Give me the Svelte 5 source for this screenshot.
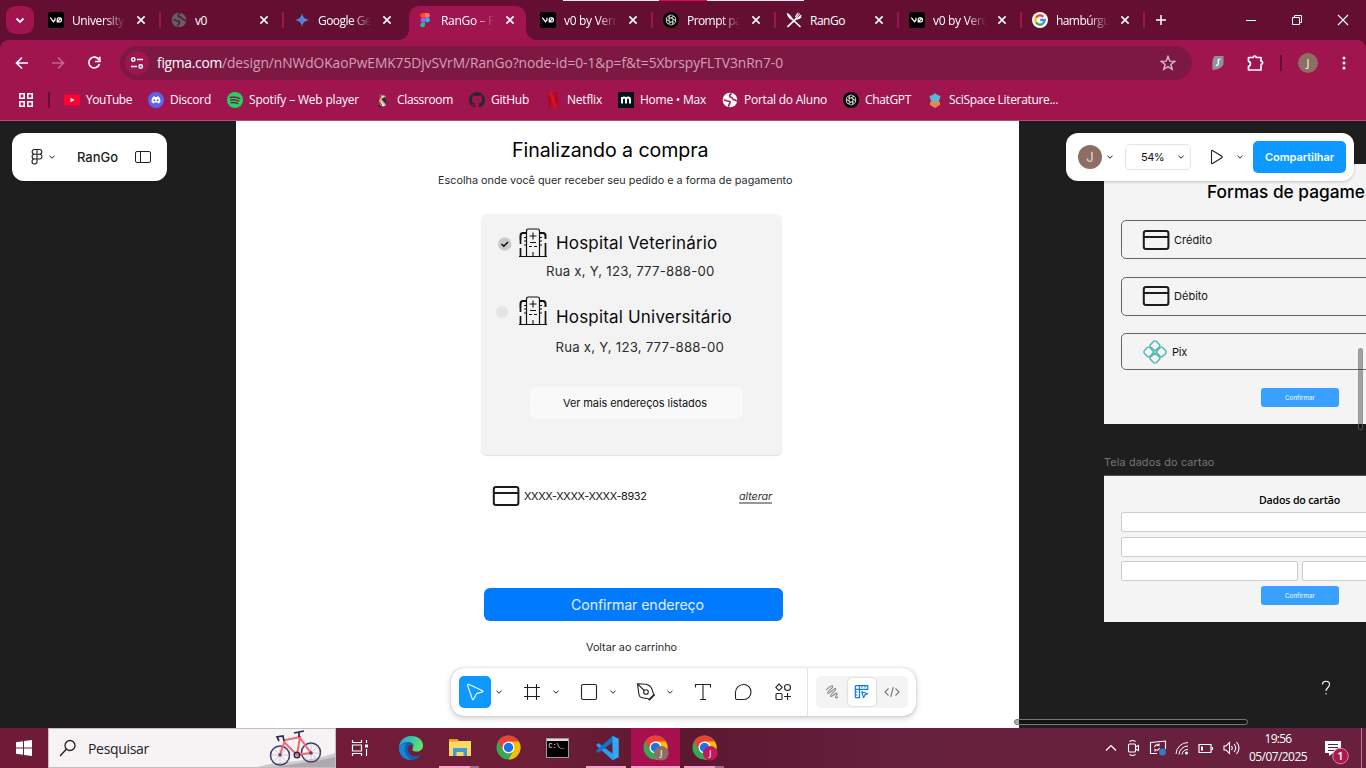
<script>
  const tabs = [
    { icon: 'v0', title: 'University', w: 52, fade: true, sep: true },
    { icon: 'globe', title: 'v0', w: 12, sep: true },
    { icon: 'gemini', title: 'Google Ge', w: 53, fade: true },
    { icon: 'figma', title: 'RanGo – F', w: 53, fade: true, active: true },
    { icon: 'v0', title: 'v0 by Verc', w: 54, fade: true, sep: true },
    { icon: 'gpt', title: 'Prompt pa', w: 54, fade: true, sep: true },
    { icon: 'cutlery', title: 'RanGo', w: 35, sep: true },
    { icon: 'v0', title: 'v0 by Verc', w: 54, fade: true, sep: true },
    { icon: 'google', title: 'hambúrgu', w: 54, fade: true, sep: true }
  ];
  const bookmarks = [
    { icon: 'youtube', name: 'YouTube', w: 46 },
    { icon: 'discord', name: 'Discord', w: 41 },
    { icon: 'spotify', name: 'Spotify – Web player', w: 110 },
    { icon: 'owl', name: 'Classroom', w: 56 },
    { icon: 'github', name: 'GitHub', w: 38 },
    { icon: 'netflix', name: 'Netflix', w: 35 },
    { icon: 'max', name: 'Home • Max', w: 66 },
    { icon: 'portal', name: 'Portal do Aluno', w: 83 },
    { icon: 'gpt', name: 'ChatGPT', w: 46 },
    { icon: 'scispace', name: 'SciSpace Literature...', w: 109 }
  ];
  // Canvas labels: left edge, vertical centre, width and font size.
  const labels = [
    { t: 'Finalizando a compra', x: 512, y: 151, w: 196.5, s: 19.6, c: '#000' },
    { t: 'Escolha onde você quer receber seu pedido e a forma de pagamento', x: 438, y: 180.5, w: 354.5, s: 10.8, c: '#2a2a2a' },
    { t: 'Hospital Veterinário', x: 556, y: 243, w: 161.5, s: 17, c: '#0a0a0a' },
    { t: 'Rua x, Y, 123, 777-888-00', x: 546, y: 272, w: 168.5, s: 13.2, c: '#2a2a2a' },
    { t: 'Hospital Universitário', x: 556, y: 316.5, w: 176, s: 17, c: '#0a0a0a' },
    { t: 'Rua x, Y, 123, 777-888-00', x: 555.5, y: 347.5, w: 168.5, s: 13.2, c: '#2a2a2a' },
    { t: 'XXXX-XXXX-XXXX-8932', x: 524, y: 497, w: 122.5, s: 10.9, c: '#161616' },
    { t: 'Voltar ao carrinho', x: 586, y: 647.5, w: 91, s: 10.8, c: '#2a2a2a' },
    { t: 'Tela dados do cartao', x: 1104, y: 463, w: 110.5, s: 10.8, c: '#777' }
  ];
  // Spreads a label's letters so that it spans the given width.
  function fit(node, w) {
    const apply = () => {
      node.style.letterSpacing = '0px';
      const n = [...node.textContent].length;
      const r = document.createRange();
      r.selectNodeContents(node);
      node.style.letterSpacing = (w - r.getBoundingClientRect().width) / n + 'px';
    };
    apply();
    document.fonts?.ready.then(apply);
  }
</script>

{#snippet knot(c)}
  <g fill="none" stroke={c} stroke-width="1.100">
    {#each [0, 60, 120, 180, 240, 300] as a}
      <path transform="rotate({a} 8 8)" d="M5.600 9.400V4.400a2.600 2.600 0 0 1 4-2.200L12.600 4M8 5.400l2.400-1.300" />
    {/each}
  </g>
{/snippet}

{#snippet chrome(badge)}
  <svg width="26" height="26" viewBox="0 0 26 26">
    <circle cx="12.5" cy="12.5" r="12" fill="#34a853" />
    <path d="M12.5 12.5 2.1 6.5A12 12 0 0 1 22.9 6.5Z" fill="#ea4335" />
    <path d="M12.5 6.5h10.4A12 12 0 0 1 12.5 24.5L17.7 15.5Z" fill="#fbbc04" />
    <path d="M2.1 6.5 7.3 15.5 12.5 12.5V6.5Z" fill="#ea4335" />
    <circle cx="12.5" cy="12.5" r="6" fill="#fff" /><circle cx="12.5" cy="12.5" r="4.7" fill="#1a73e8" />
    {#if badge}<circle cx="18.3" cy="18.3" r="7.3" fill={badge} /><text x="18.3" y="21.6" text-anchor="middle" font-size="9.5" font-family="Open Sans, sans-serif" fill="#fff">J</text>{/if}
  </svg>
{/snippet}

{#snippet fav(k)}
  <svg class="fav" width="16" height="16" viewBox="0 0 16 16">
    {#if k === 'v0'}
      <rect width="16" height="16" rx="2.5" fill="#000" />
      <path d="M2.300 5.700 5.500 9.700 7 8V5.700M9.200 9.900h2.700a1.500 1.500 0 0 0 1.500-1.500V7.300a1.500 1.500 0 0 0-1.500-1.500h-1.200a1.500 1.500 0 0 0-1.500 1.500ZM9.500 9.500l3.600-3.400" fill="none" stroke="#fff" stroke-width="1.200" />
    {:else if k === 'globe'}
      <circle cx="8" cy="8" r="7.3" fill="#5f6368" /><path d="M2.500 7.500c1.500 0 2 1.500 4 1.500s2.500 1 1.500 2.500-1.500 1.500-1 3M9 1.500C6.500 3 6.500 5 9 5s1 2.500 3 2.500 1.500 1.500 3 1.500" fill="none" stroke="#640f32" stroke-width="1.500" />
    {:else if k === 'gemini'}
      <defs><linearGradient id="gm" x1="0" y1="1" x2="1" y2="0"><stop stop-color="#9a78c8" /><stop offset=".45" stop-color="#4285d8" /><stop offset="1" stop-color="#60a8e8" /></linearGradient></defs>
      <path d="M8 1.300C9 5.500 10.500 7 14.700 8 10.500 9 9 10.500 8 14.700 7 10.500 5.500 9 1.300 8 5.500 7 7 5.500 8 1.300Z" fill="url(#gm)" />
    {:else if k === 'figma'}
      <path d="M8 1H5.500a2.400 2.400 0 0 0 0 4.800H8Z" fill="#f24e1e" /><path d="M8 1h2.500a2.400 2.400 0 0 1 0 4.800H8Z" fill="#ff7262" /><path d="M8 5.800H5.500a2.400 2.400 0 0 0 0 4.700H8Z" fill="#a259ff" /><circle cx="10.500" cy="8.100" r="2.400" fill="#1abcfe" /><path d="M8 10.500H5.500A2.400 2.400 0 1 0 8 13Z" fill="#0acf83" />
    {:else if k === 'gpt'}
      <circle cx="8" cy="8" r="8" fill="#000" /><g transform="translate(1.6 1.600) scale(.8)">{@render knot('#ddd')}</g>
    {:else if k === 'cutlery'}
      <g fill="none" stroke="#fff" stroke-linecap="round"><path d="m2 14.300 8.500-8M6 7l8 7.500" stroke-width="1.700" /><path d="m10.500 5.500 3-3.500M11.500 6.500 15 3.300M9.600 4.600 12 1M10 6.500c1.200 1 3 .3 5-1.500" stroke-width="1.100" /></g><path d="M.8 1C3 1.500 6.500 4.500 6.800 8 4 8 1 4.500.8 1Z" fill="#fff" />
    {:else if k === 'google'}
      <circle cx="8" cy="8" r="8" fill="#fff" /><g fill="none" stroke-width="2.300"><path d="M4 5.600A4.700 4.700 0 0 1 11.400 4.700" stroke="#ea4335" /><path d="M4 5.600a4.700 4.700 0 0 0 0 4.800" stroke="#fbbc04" /><path d="M4 10.400a4.700 4.700 0 0 0 7 1.200" stroke="#34a853" /><path d="M11 11.600A4.700 4.700 0 0 0 12.700 8H8.200" stroke="#4285f4" /></g>
    {:else if k === 'youtube'}
      <rect y="2.500" width="16" height="11" rx="2.700" fill="#f03" /><path d="m6.500 5.700 4 2.300-4 2.300Z" fill="#fff" />
    {:else if k === 'discord'}
      <circle cx="8" cy="8" r="8" fill="#5865f2" /><path d="M5 4.700 6.700 4.300l.4.600h1.800l.4-.6 1.700.4c1.200 1.900 1.600 3.500 1.400 5.500-.8.700-1.600 1-2.300 1.200l-.7-1H6.600l-.7 1c-.7-.2-1.500-.5-2.300-1.200-.2-2 .2-3.600 1.400-5.500Z" fill="#fff" /><circle cx="6.300" cy="8.200" r="1" fill="#5865f2" /><circle cx="9.700" cy="8.200" r="1" fill="#5865f2" />
    {:else if k === 'spotify'}
      <circle cx="8" cy="8" r="8" fill="#1ed760" /><path d="M3.300 5.500c3.300-.9 6.700-.5 9.600 1.100M3.700 8.200c2.900-.8 5.700-.4 8.100 1M4.200 10.800c2.400-.6 4.600-.3 6.500.8" fill="none" stroke="#851747" stroke-width="1.400" stroke-linecap="round" />
    {:else if k === 'owl'}
      <path d="M4 1.500 6 3l4 .500 1.500 5-1 5.500H5L4 9l1-3Z" fill="#e0a878" /><path d="m4 1.500 2 2-.5 3ZM6.500 7l5 6V7l-2-2ZM3.500 12l3 2-1 1.500h-2Z" fill="#222b55" /><path d="m7 4 2 .500L8 6ZM6 9l4 5-2.500.500Z" fill="#fff0d4" /><path d="M4 10.500 7 13M9 14.500h4" stroke="#762f38" />
    {:else if k === 'github'}
      <path d="M8 0a8 8 0 0 0-2.500 15.600c.4.100.5-.2.500-.4v-1.500c-2.200.5-2.700-.9-2.700-.9-.4-.9-.9-1.200-.9-1.200-.7-.5.1-.5.1-.5.800.1 1.200.8 1.200.8.700 1.300 1.900.9 2.400.7.100-.5.300-.9.500-1.100-1.800-.2-3.700-.9-3.700-4 0-.9.300-1.600.8-2.100-.1-.2-.4-1 .1-2.100 0 0 .7-.2 2.200.8a7.600 7.600 0 0 1 4 0c1.500-1 2.200-.8 2.200-.8.500 1.100.2 1.900.1 2.100.5.500.8 1.200.8 2.100 0 3.100-1.900 3.800-3.700 4 .3.300.6.800.6 1.500v2.200c0 .2.100.5.500.4A8 8 0 0 0 8 0Z" fill="#24292f" />
    {:else if k === 'netflix'}
      <path d="M3.500 0H6v15.500l-2.500.5ZM10 0h2.500v16l-2.500-.5Z" fill="#b20710" /><path d="M3.500 0H6.300l6.200 16-2.800-.4Z" fill="#f00a18" />
    {:else if k === 'max'}
      <rect width="16" height="16" fill="#07131d" /><path d="M4 11.500V5M4 7.500C4.500 4.800 8 4.800 8 7.500v4M8 7.500c.5-2.700 4-2.700 4 0v4" fill="none" stroke="#fff" stroke-width="2" />
    {:else if k === 'portal'}
      <circle cx="8" cy="8" r="7.300" fill="#fff" /><path d="M2 8c2 0 2.500 1.200 4.500 1.200s2 1.300 1 2.500-1 1.500-.8 3M9.500 1.500C7 3 7 5 9 5.200s1 2.300 3 2.500 1.500 1 3 1" stroke="#a0154e" stroke-width="1.600" fill="none" />
    {:else if k === 'scispace'}
      <path d="m3 10 5-3 5 3v3l-5 3-5-3Z" fill="#e98645" /><path d="m2.500 4 3-1L8 1l2.500 2 3 1-1 4L8 11 3.500 8Z" fill="#59b7dc" /><path d="m4 8.500 4 2.500 4-2.500" stroke="#caa078" fill="none" />
    {/if}
  </svg>
{/snippet}

{#snippet chev()}
  <svg width="8" height="8" viewBox="0 0 8 8"><path d="M1.500 2.800 4 5.200l2.500-2.400" fill="none" stroke="#222" /></svg>
{/snippet}

{#snippet card()}
  <svg width="28" height="22" viewBox="0 0 28 22"><rect x="1.800" y="2" width="24.600" height="18" rx="2.200" fill="none" stroke="#1c1c1e" stroke-width="2" /><path d="M1.800 8h24.600" stroke="#1c1c1e" stroke-width="2" /></svg>
{/snippet}

{#snippet hospital()}
  <svg width="28" height="30" viewBox="0 0 28 30">
    <g fill="none" stroke="#111">
      <path d="M0 28.500h28" stroke-width="1" /><path d="M7.500 28V3Q7.500 1 9.500 1h9q2 0 2 2v25" stroke-width="1.200" />
      <path d="M14 4.500v7M10.500 8h7M11 14.500h6M10 18.500h3M15 18.500h3M14 24v4M5 9.500h2.500M5 13h2.500M5 17h2.500M20.500 9.500H23M20.500 13H23M20.500 17H23" stroke-width="1.100" />
      <path d="M1.500 12V8Q1.500 5 4 5h3M21 5h3q2.500 0 2.500 3v3" stroke-width="2" /><path d="M1.500 12v4M26.500 15v13M1.500 20v8" stroke-width="1.700" />
    </g>
  </svg>
{/snippet}

<div class="screen">
  <header class="strip">
    <div class="peek"></div>
    <div class="search-tabs"><svg width="28" height="28" viewBox="0 0 28 28"><path d="m10.500 12.500 3.500 3.500 3.500-3.500" fill="none" stroke="#fff" stroke-width="1.800" /></svg></div>
    {#each tabs as t}
      <div class="tab" class:active={t.active}>
        {@render fav(t.icon)}
        <div class="title" class:fade={t.fade}><span use:fit={t.w}>{t.title}</span></div>
        <svg width="10" height="10" viewBox="0 0 10 10"><path d="m1.400 1.400 7.200 7.200m0-7.200L1.400 8.600" stroke="#fff" stroke-width="1.600" /></svg>
        <i class:on={t.sep}></i>
      </div>
    {/each}
    <svg class="plus" width="12" height="12" viewBox="0 0 12 12"><path d="M6 1v10M1 6h10" stroke="#fff" stroke-width="1.500" /></svg>
    <div class="winctl">
      <svg width="12" height="12"><path d="M1 6.500h10" stroke="#fff" /></svg>
      <svg width="12" height="12"><path d="M1.500 3.500h7v7h-7ZM3.500 3V1.500h7v7H9" stroke="#fff" fill="none" /></svg>
      <svg width="12" height="12"><path d="m1 1 10 10M11 1 1 11" stroke="#fff" stroke-width="1.100" /></svg>
    </div>
  </header>

  <div class="nav">
    <svg width="16" height="16" viewBox="0 0 16 16"><path d="M14 8H3M8 2.500 2.500 8 8 13.500" fill="none" stroke="#fff" stroke-width="1.700" /></svg>
    <svg width="16" height="16" viewBox="0 0 16 16"><path d="M2 8h11M8 2.500 13.500 8 8 13.500" fill="none" stroke="#c1668c" stroke-width="1.700" /></svg>
    <svg width="16" height="16" viewBox="0 0 16 16"><path d="M13 5A5.400 5.400 0 1 0 13.400 9" fill="none" stroke="#fff" stroke-width="1.700" /><path d="M13.800 1.800v4.700H9.100" fill="none" stroke="#fff" stroke-width="1.700" /></svg>
    <div class="omni">
      <span class="site"><svg width="14" height="14" viewBox="0 0 14 14"><g fill="none" stroke="#fff" stroke-width="1.500"><circle cx="3.300" cy="3.500" r="1.700" /><path d="M7 3.500h6M1 10.500h6" /><circle cx="10.700" cy="10.500" r="1.700" /></g></svg></span>
      <span class="url"><b use:fit={65}>figma.com</b><span use:fit={561}>/design/nNWdOKaoPwEMK75DjvSVrM/RanGo?node-id=0-1&p=f&t=5XbrspyFLTV3nRn7-0</span></span>
      <svg width="16" height="16" viewBox="0 0 16 16"><path d="m8 1.500 1.800 4.600 4.900.3-3.800 3.100 1.300 4.800L8 11.600l-4.200 2.700 1.300-4.800L1.300 6.400l4.900-.3Z" fill="none" stroke="#d8bac8" stroke-width="1.400" /></svg>
    </div>
    <div class="ext">
      <svg width="14" height="16" viewBox="0 0 14 16"><path d="M4 1h8.500v7c0 4-4 6.500-11 7C1.500 10 .5 3 4 1Z" fill="#8f9396" /><path d="M9.300 4.500C6 3.800 7.800 7 7.300 8.500S6 10.800 4.800 10.300" stroke="#fff" stroke-width="1.400" fill="none" /></svg>
      <svg width="18" height="18" viewBox="0 0 18 18"><path d="M2.500 3.500h4.700a1.500 1.500 0 0 1 3 0H15v3.700a1.600 1.600 0 0 1 0 3.200V16H2.500v-3.700c2.600-.5 2.600-4.500 0-5Z" fill="none" stroke="#fff" stroke-width="1.700" stroke-linejoin="round" /></svg>
      <i></i>
      <span class="me">J</span>
      <svg width="4" height="16"><circle cx="2" cy="3" r="1.500" fill="#fff" /><circle cx="2" cy="8" r="1.500" fill="#fff" /><circle cx="2" cy="13" r="1.500" fill="#fff" /></svg>
    </div>
  </div>

  <div class="marks">
    <svg width="14" height="14"><path d="M.8.800h4.400v4.400H.8ZM8.800.800h4.400v4.400H8.800ZM.8 8.800h4.400v4.400H.8ZM8.800 8.800h4.400v4.400H8.800Z" fill="none" stroke="#fff" stroke-width="1.600" /></svg>
    <i></i>
    {#each bookmarks as b}
      <div class="mark">{@render fav(b.icon)}<div style="width:{b.w}px"><span use:fit={b.w}>{b.name}</span></div></div>
    {/each}
  </div>

  <main class="canvas">
    <div class="page"></div>
    <div class="addr"></div>
    <div class="more"><span use:fit={144}>Ver mais endereços listados</span></div>
    <div class="confirm"><span use:fit={133}>Confirmar endereço</span></div>
    <svg class="at" style="left:498px;top:116px" width="14" height="14" viewBox="0 0 14 14"><circle cx="6.700" cy="7" r="6.700" fill="#cacaca" /><path d="m3.500 7 2.300 2.200L10 5" fill="none" stroke="#111" stroke-width="1.600" /></svg>
    <div class="radio"></div>
    <div class="at" style="left:519px;top:107px">{@render hospital()}</div>
    <div class="at" style="left:519px;top:175px">{@render hospital()}</div>
    <div class="at" style="left:492px;top:364px">{@render card()}</div>
    {#each labels as l}
      <span class="lbl" style="left:{l.x}px;top:{l.y - 121}px;font-size:{l.s}px;color:{l.c}" use:fit={l.w}>{l.t}</span>
    {/each}
    <span class="lbl alter" use:fit={33}>alterar</span>

    <section class="pay">
      <h2><span use:fit={158}>Formas de pagame</span></h2>
      <div class="opt">{@render card()}<span use:fit={38}>Crédito</span></div>
      <div class="opt">{@render card()}<span use:fit={34}>Débito</span></div>
      <div class="opt pix">
        <svg width="24" height="24" viewBox="0 0 24 24"><g fill="none" stroke="#4db6ac" stroke-width="1.400">{#each [0, 90, 180, 270] as a}<path transform="rotate({a} 12 12)" d="M12 10.800 7.600 6.900q-1-1.300 0-2.500L10.500 1.500q1.500-1.200 3 0l2.900 2.900q1 1.200 0 2.500Z" />{/each}</g></svg>
        <span use:fit={15}>Pix</span>
      </div>
      <div class="ok"><span use:fit={30}>Confirmar</span></div>
    </section>

    <section class="data">
      <h3><span use:fit={81}>Dados do cartão</span></h3>
      <div class="inp"></div><div class="inp"></div>
      <div class="two"><div class="inp"></div><div class="inp"></div></div>
      <div class="ok"><span use:fit={30}>Confirmar</span></div>
    </section>

    <div class="panel left">
      <svg width="12" height="18" viewBox="0 0 12 18"><g fill="none" stroke="#222" stroke-width="1.100"><path d="M6 1.500v12.200A2.500 2.500 0 1 1 3.500 11H6M6 1.500H3.500a2.350 2.350 0 0 0 0 4.700h5a2.350 2.350 0 0 0 0-4.700ZM6 6.200H3.500a2.400 2.400 0 0 0 0 4.800M6 11h2.500a2.400 2.400 0 0 0 0-4.800" /></g></svg>
      {@render chev()}
      <b use:fit={41}>RanGo</b>
      <svg width="16" height="12" viewBox="0 0 16 12"><rect x=".5" y=".5" width="15" height="11" rx="1.500" fill="none" stroke="#222" /><path d="M5.500 0v12" stroke="#222" /></svg>
    </div>

    <div class="panel right">
      <span class="who">J</span>{@render chev()}
      <div class="zoom"><span use:fit={23}>54%</span>{@render chev()}</div>
      <svg class="play" width="14" height="16" viewBox="0 0 14 16"><path d="M1.500 2.200v11.600q0 1.200 1 .7l9.300-5.700q.9-.8 0-1.600L2.500 1.500q-1-.5-1 .7Z" fill="none" stroke="#222" stroke-width="1.100" /></svg>
      {@render chev()}
      <button><span use:fit={69}>Compartilhar</span></button>
    </div>

    <div class="vbar"></div>
    <div class="hbar"></div>
    <svg class="at" style="left:1321px;top:559px" width="10" height="16" viewBox="0 0 10 16"><path d="M1.500 4.500C1.500.200 8.500.200 8.500 4.500c0 3-3.500 3.500-3.500 6.500M5 13v1.300" fill="none" stroke="#fff" stroke-width="1.100" /></svg>

    <div class="tools">
      <span class="sel"><svg width="20" height="20" viewBox="0 0 20 20"><path d="M2.600 3.400 7.300 17q.6 1.400 1.300.1l2.600-4.900q.3-.6 1-.8l5.200-1.500q1.300-.5.100-1.200L3.600 2.300q-1.400-.5-1 1.100Z" fill="none" stroke="#fff" stroke-width="1.100" /></svg></span>
      <span class="dd">{@render chev()}</span>
      <span class="tool"><svg width="18" height="18"><path d="M4.500 1v16M13.500 1v16M1 4.500h16M1 13.500h16" stroke="#222" stroke-width="1.100" /></svg></span>
      <span class="dd">{@render chev()}</span>
      <span class="tool"><svg width="18" height="18"><rect x="1.500" y="1.500" width="15" height="15" rx="1.500" fill="none" stroke="#222" stroke-width="1.100" /></svg></span>
      <span class="dd">{@render chev()}</span>
      <span class="tool"><svg width="20" height="20" viewBox="0 0 20 20"><g fill="none" stroke="#222" stroke-width="1.100"><path d="m1.500 1.800 8.500.5q4.500 1 6 5l1.500 4.500 1 1.200-5 5-1.300-1.200-6-1q-2.700-.5-3.200-3ZM2 2.300l6.300 6.200M18 12.500l-5 5" /><circle cx="10" cy="10" r="2.300" /></g></svg></span>
      <span class="dd">{@render chev()}</span>
      <span class="tool type"><svg width="18" height="18"><path d="M1.500 4.500v-3h15v3M9 1.500v15M6 16.500h6" fill="none" stroke="#222" stroke-width="1.100" /></svg></span>
      <span class="tool"><svg width="18" height="18"><path d="M9.500 1.500a7.500 7.500 0 0 1 0 15H3q-1.500 0-1.500-1.500V9.500a8 8 0 0 1 8-8Z" fill="none" stroke="#222" stroke-width="1.100" /></svg></span>
      <span class="tool"><svg width="18" height="18"><g fill="none" stroke="#222" stroke-width="1.100"><path d="m5 1 3.200 3.300L5 7.600 1.800 4.300Z" stroke-linejoin="round" /><circle cx="13.500" cy="4.500" r="3" /><rect x="2" y="10.500" width="6" height="6" rx="1" /><path d="M13.500 10v7M10 13.500h7" /></g></svg></span>
      <i></i>
      <div class="modes">
        <span><svg width="16" height="16" viewBox="0 0 16 16"><path d="M2.200 6C4.500 3.200 8 1 8.800 2.200S2.500 7.800 3.800 9.200 10.500 3.200 11.700 4.600 5.300 11 6.700 12.300s5-4.300 6.300-3-2.500 3.200-1.300 4.200 1.800-.3 2.300-.8" fill="none" stroke="#888" stroke-width="1.100" /></svg></span>
        <span class="cur"><svg width="16" height="16" viewBox="0 0 16 16"><g fill="none" stroke="#0d7de5" stroke-width="1.200"><path d="M2.500 1.700h11.300v3.600H5.500v8.400H2q-.7 0-.7-.7V2.500q0-.8 1.200-.8ZM5.500 1.700v3.600H1.300M8 2v1.500M11 2v1.500M1.500 8h2M1.500 11h2M7.700 7.700l6 2-2.700 1.200-1.500 2.800Z" stroke-linejoin="round" /></g></svg></span>
        <span><svg width="16" height="16" viewBox="0 0 16 16"><path d="m4.500 4.500-3.500 3.500 3.500 3.500M11.500 4.500 15 8l-3.500 3.500M9.300 3 6.700 13" fill="none" stroke="#777" stroke-width="1.100" /></svg></span>
      </div>
    </div>
  </main>

  <footer class="taskbar">
    <div class="start"><svg width="16" height="16"><path d="M0 2.300 7 1.300V7.500H0ZM8 1.100 16 0v7.500H8ZM0 8.500h7v6.200l-7-1ZM8 8.500h8V16l-8-1.100Z" fill="#fff" /></svg></div>
    <div class="find">
      <svg width="18" height="18" viewBox="0 0 18 18"><circle cx="11" cy="6.500" r="5" fill="none" stroke="#222" stroke-width="1.300" /><path d="m7.500 10-6.500 7" stroke="#222" stroke-width="1.400" /></svg>
      <span use:fit={61}>Pesquisar</span>
      <svg class="bike" width="78" height="38" viewBox="0 0 78 38">
        <path d="M0 38C25 31 50 34 78 24v14Z" fill="#cfcacd" /><path d="M20 38c20-4 40-5 58-10v10Z" fill="#8c898c" opacity=".5" />
        <g fill="none"><g stroke="#3d376c" stroke-width="1.500"><circle cx="23" cy="26.500" r="9.500" /><circle cx="54" cy="23.500" r="9.500" /></g><g stroke="#9590b0" stroke-width=".4"><path d="M13 26h20M23 16v20M16 19l14 14M30 19 16 33M44 24h20M54 14v20M47 17l14 14M61 17 47 31" /></g><path d="m23 26 5-15 15-3-3 18L27 13M40 26l14-2L43 9" stroke="#f16870" stroke-width="2" /><path d="m27 12-1-5-6 1 2 4M42 8V3M37 4l10-2" stroke="#2b294d" stroke-width="1.700" /><circle cx="40" cy="26" r="2.700" stroke="#2b294d" stroke-width="1.600" /><circle cx="23" cy="26" r="1.200" stroke="#2b294d" /><circle cx="54" cy="24" r="1.200" stroke="#2b294d" /></g>
      </svg>
    </div>
    <div class="app view"><svg width="18" height="18"><g fill="none" stroke="#fff" stroke-width="1.200"><path d="M1.500 1v2.500h9V1M1.500 17v-2.500h9V17M1.500 6h9v6h-9ZM15.500 1v3M15.500 10v7" /><path d="M14 7h3" stroke-width="3" /></g></svg></div>
    <div class="app"><svg width="24" height="24" viewBox="0 0 24 24"><defs><linearGradient id="e1" x1="0" y1="0" x2="1" y2=".3"><stop stop-color="#1b9de2" /><stop offset="1" stop-color="#5ee36f" /></linearGradient></defs><path d="M0 12C0 5 5 0 12 0c8 0 12 5 12 9.500 0 4-3 6-6.500 6s-4.500-1.300-4-2.500c1.500-2.300 0-5-3-5C5 8 1 10 0 12Z" fill="url(#e1)" /><path d="M0 12c.5-3 4-6 9-6 3.500 0 6 2 6 5-1-3-5-3-6 0-1.600 5 3 10.500 9 9 1.500-.4 3-1.200 4-1.500-2 3.300-5.500 5.500-10 5.500C5 24 0 19 0 12Z" fill="#0d62b8" /><path d="M0 12c1-3 4-5 8-4.500-4 2-4.500 9.500 4 16.500C5 24 0 19 0 12Z" fill="#1587d5" /></svg></div>
    <div class="app ext2"><svg width="22" height="20"><path d="M0 1h8l2 2h12v15H0Z" fill="#ffd866" /><path d="M0 1h8l1.500 2.500H0Z" fill="#e6a117" /><path d="M4 18v-8h14v8h-3.500v-4h-7v4Z" fill="#3e9bdc" /></svg></div>
    <div class="app">{@render chrome()}</div>
    <div class="app"><svg width="23" height="20"><rect x=".5" y=".5" width="22" height="19" fill="#000" stroke="#999" /><path d="M1 2h21" stroke="#ddd" stroke-width="2" /><text x="2.500" y="10" font-size="6.500" font-family="Liberation Mono, monospace" fill="#fff">C:\_</text></svg></div>
    <div class="app run"><svg width="24" height="24" viewBox="0 0 24 24"><path d="m17.500 0 6 2.800v18.400l-6 2.800L1 9.300 3.300 7 18 18Z" fill="#2a9df4" /><path d="M17.500 0 1 14.700 3.300 17 18 6Z" fill="#0e76c3" /><path d="m17.500 0 6 2.800v18.400l-6 2.800Z" fill="#31a8f5" /></svg></div>
    <div class="app now">{@render chrome('#8d6e63')}</div>
    <div class="app ext2">{@render chrome('#c2185b')}</div>
    <div class="tray">
      <svg width="12" height="12"><path d="m1 8.500 5-5 5 5" fill="none" stroke="#fff" stroke-width="1.200" /></svg>
      <svg width="14" height="18"><g fill="none" stroke="#fff" stroke-width="1.100"><rect x="2.500" y="5" width="7" height="8" rx="1" /><path d="m9.500 8 3-1.500v5l-3-1.500M3.500 2.500q3-2 6 0M3.500 15.500q3 2 6 0" /></g></svg>
      <svg width="18" height="18"><path d="M8 14.500H1.500v-11L16.500 2v8M5.500 8q1.500-3.500 4.500-1.500V4.500M10 6.500H8M10.500 9q-1.500 3.500-4.500 1.500v2" fill="none" stroke="#fff" stroke-width="1.100" /><circle cx="13.500" cy="13" r="3.500" fill="#2e7cc4" /></svg>
      <svg width="14" height="14"><g fill="none" stroke="#fff"><path d="M1 13A12 12 0 0 1 13 1.500M4 13.500A9 9 0 0 1 13 5M7 13.500a6 6 0 0 1 6-5" /></g><circle cx="11.500" cy="12" r="1.500" fill="#fff" /></svg>
      <svg width="16" height="12"><path d="M1 2.500h12v8H1ZM14.500 5v3" fill="none" stroke="#fff" stroke-width="1.200" /><path d="M3 4.500h2v4H3Z" fill="#fff" /></svg>
      <svg width="17" height="16"><path d="M1 6h2l3.500-3.500v11L3 10H1ZM8.500 6q1.500 2 0 4M11 4q3.500 4 0 8M13.500 2q5 6 0 12" fill="none" stroke="#fff" stroke-width="1.100" /></svg>
    </div>
    <div class="clock"><span use:fit={27}>19:56</span><span use:fit={58}>05/07/2025</span></div>
    <svg class="note" width="26" height="26"><path d="M1 1h16v12H9l-4 3v-3H1Z" fill="#fff" /><path d="M4 4.500h10M4 7.500h10M4 10.500h6" stroke="#66203d" /><circle cx="16.500" cy="16" r="7.800" fill="#ad174f" stroke="#d687a5" /><text x="16.500" y="20" text-anchor="middle" font-family="Open Sans, sans-serif" font-size="11" font-weight="600" fill="#fff">1</text></svg>
    <i class="desk"></i>
  </footer>
</div>

<style>
  :global(body) { margin: 0; overflow: hidden; }
  .screen { width: 1366px; height: 768px; overflow: hidden; background: #a0154e; font-family: "Open Sans", "Noto Sans", sans-serif; font-size: 12px; color: #fff; display: flex; flex-direction: column; position: relative; }
  .screen * { box-sizing: border-box; }
  svg { flex: none; display: block; }
  span, b { white-space: nowrap; }
  b { font-weight: inherit; }

  .strip { height: 40px; flex: none; background: #640f32; display: flex; align-items: center; padding-left: 6px; position: relative; }
  .peek { position: absolute; left: 563px; top: 0; width: 241px; height: 1px; background: linear-gradient(90deg, #eee 0 96px, #e8005c 96px 144px, #eee 144px); }
  .search-tabs { width: 28px; height: 28px; border-radius: 9px; background: #a0154e; margin-right: 6px; }
  .tab { width: 123px; height: 28px; display: flex; align-items: center; padding-left: 8px; position: relative; }
  .title { width: 56px; margin: 1px 8px 0; overflow: hidden; white-space: nowrap; }
  .fade { -webkit-mask-image: linear-gradient(90deg, #000 60%, transparent 95%); mask-image: linear-gradient(90deg, #000 60%, transparent 95%); }
  .tab i { width: 2px; height: 16px; margin-left: 13px; }
  .tab i.on, .tab:nth-child(4) i { background: #a0154e; }
  .tab.active::before { content: ''; position: absolute; left: 0; top: 0; width: 117px; height: 34px; border-radius: 10px 10px 0 0; background: #a0154e; }
  .tab.active::after { content: ''; position: absolute; left: -10px; top: 24px; width: 137px; height: 10px; background: radial-gradient(circle at 0 0, transparent 9.500px, #a0154e 10px) left/10px 10px no-repeat, radial-gradient(circle at 100% 0, transparent 9.500px, #a0154e 10px) right/10px 10px no-repeat; }
  .tab > :global(*) { position: relative; z-index: 1; }
  .plus { margin-left: 8px; }
  .winctl { margin-left: auto; display: flex; gap: 34px; padding-right: 17px; }

  .nav { height: 46px; flex: none; display: flex; align-items: center; padding-left: 14px; gap: 20px; background: radial-gradient(circle at 8px 8px, #a0154e 7.500px, #640f32 8px) 0 0/8px 8px no-repeat, radial-gradient(circle at 0 8px, #a0154e 7.500px, #640f32 8px) 100% 0/8px 8px no-repeat, #a0154e; }
  .omni { width: 1072px; height: 34px; border-radius: 17px; background: #7d1843; display: flex; align-items: center; padding: 0 16px 0 5px; margin-left: -2px; }
  .site { width: 24px; height: 24px; border-radius: 50%; background: #a0154e; display: grid; place-items: center; }
  .url { margin-left: 8px; flex: 1; display: flex; font-size: 13.800px; color: #d2a0b6; padding-bottom: 1px; }
  .url b { color: #fff; }
  .ext { display: flex; align-items: center; margin-left: -1px; }
  .ext svg:nth-child(2) { margin-left: 21px; }
  .ext i { width: 2px; height: 16px; background: #640f32; margin-left: 16px; }
  .me { width: 20px; height: 20px; border-radius: 50%; background: #8d6e63; margin: 0 24px 0 16px; text-align: center; font-size: 11px; line-height: 19px; }

  .marks { height: 35px; flex: none; display: flex; align-items: center; padding: 0 0 7px 19px; border-bottom: 1px solid #b54a7a; }
  .marks i { width: 2px; height: 16px; background: #640f32; margin: 0 14px 0 15px; }
  .mark { display: flex; align-items: center; gap: 6px; margin-right: 16px; }
  .mark div { white-space: nowrap; }

  .canvas { height: 607px; flex: none; background: #1e1e1e; position: relative; overflow: hidden; font-family: Inter, sans-serif; color: #111; }
  .page { position: absolute; left: 236px; top: 0; width: 783px; height: 607px; background: #fff; }
  .at { position: absolute; }
  .addr { position: absolute; left: 481px; top: 93px; width: 301px; height: 241px; border-radius: 6px; background: #f3f3f3; box-shadow: 0 1px 1px #0002; }
  .more, .confirm { position: absolute; display: flex; align-items: center; justify-content: center; border-radius: 6px; }
  .more { left: 530px; top: 266px; width: 213px; height: 32px; background: #f9f9f9; font-size: 11px; padding: 0 3px 1px 0; }
  .confirm { left: 484px; top: 467px; width: 299px; height: 33px; background: #007aff; color: #e3efff; font-size: 14.200px; padding-left: 8px; }
  .radio { position: absolute; left: 496px; top: 185px; width: 12px; height: 12px; border-radius: 50%; background: #e5e5e5; }
  .lbl { position: absolute; transform: translateY(-50%); line-height: 1.200; }
  .alter { left: 739px; top: 376px; font-size: 10.800px; font-style: italic; color: #333; border-bottom: 1px solid #333; line-height: 12px; }

  .pay, .data { position: absolute; left: 1104px; width: 391px; background: #f4f4f4; display: flex; flex-direction: column; }
  .pay { top: 43px; height: 260px; padding: 18px 17px 0; }
  h2, h3 { margin: 0; font-weight: 500; color: #000; white-space: nowrap; }
  h2 { font-size: 17.300px; line-height: 20px; padding-left: 86px; height: 38px; }
  .opt { height: 39px; flex: none; margin-bottom: 17.500px; border: 1px solid #666; border-radius: 5px; padding-left: 20px; display: flex; align-items: center; gap: 4px; font-size: 11px; }
  .opt.pix { height: 37px; gap: 5px; padding-left: 21px; }
  .ok { width: 78px; height: 19px; border-radius: 3px; background: #38a1ff; color: #fff; font-size: 6.200px; display: flex; align-items: center; justify-content: center; margin-left: 140px; flex: none; }
  .data { top: 354px; height: 147px; padding: 17px 17px 0; border-top: 1px solid #555; }
  h3 { font-size: 10.600px; line-height: 14px; padding-left: 138px; height: 19px; font-weight: 600; font-family: "Open Sans", sans-serif; }
  .inp { height: 20px; border: 1px solid #ccc; border-radius: 2px; background: #fff; margin-bottom: 4.500px; flex: none; }
  .two { display: flex; gap: 4px; }
  .two .inp { width: 177px; }

  .panel { position: absolute; top: 12px; height: 48px; background: #fff; border-radius: 12px; display: flex; align-items: center; box-shadow: 0 1px 3px #0003; }
  .left { left: 12px; width: 155px; padding-left: 19px; }
  .left b { font-size: 13px; font-weight: 500; margin: 0 17px 0 21px; color: #222; }
  .left svg:nth-child(2) { margin-left: 5px; }
  .right { left: 1066px; width: 288px; padding-left: 12px; }
  .who { width: 24px; height: 24px; border-radius: 50%; background: #8d6e63; color: #e8dcd8; display: grid; place-items: center; font-size: 13px; margin-right: 4px; }
  .zoom { width: 66px; height: 26px; border: 1px solid #e4e4e4; border-radius: 5px; margin-left: 11px; display: flex; align-items: center; justify-content: space-between; padding: 0 5px 0 15px; font-size: 11px; }
  .play { margin: 0 19px; }
  .play + :global(svg) { margin-left: -7px; }
  .right button { margin-left: 9px; width: 93px; height: 32px; border: 0; border-radius: 5px; background: #0d99ff; color: #fff; padding: 0; font: 600 11px Inter, sans-serif; }
  .vbar { position: absolute; left: 1358px; top: 227px; width: 5px; height: 82px; border-radius: 3px; background: #0005; border: 1px solid #8888; }
  .hbar { position: absolute; left: 1014px; top: 598px; width: 234px; height: 6px; border-radius: 3px; background: #0005; border: 1px solid #777; }

  .tools { position: absolute; left: 451px; top: 547px; width: 465px; height: 48px; border-radius: 13px; background: #fff; box-shadow: 0 0 1px #0006, 0 2px 6px #0003; display: flex; align-items: center; padding-left: 8px; }
  .sel, .tool { width: 32px; height: 32px; display: grid; place-items: center; border-radius: 5px; }
  .sel { background: #0d99ff; }
  .dd { width: 17px; display: grid; place-items: center; padding-right: 1px; }
  .dd + .tool { margin-left: 8px; }
  .tool + .tool { margin-left: 8px; }
  .type { padding-right: 1px; }
  .tools > i { width: 1px; height: 48px; background: #e4e4e4; margin: 0 8px; }
  .modes { width: 92px; height: 32px; border-radius: 5px; background: #f4f4f4; display: flex; align-items: center; padding-left: 1px; }
  .modes span { width: 30px; height: 28px; display: grid; place-items: center; border-radius: 4px; }
  .modes .cur { width: 28px; margin: 0 1px; background: #fff; box-shadow: 0 0 2px #0004; }

  .taskbar { height: 40px; flex: none; display: flex; align-items: stretch; background: linear-gradient(90deg, #6f1b37 0, #701c38 27%, #6d1e37 40%, #5b1830 50%, #65203b 65%, #69203c 100%); }
  .start { width: 48px; display: grid; place-items: center; }
  .find { width: 288px; background: #f6f3f4; border: 1px solid #c7bcc1; display: flex; align-items: center; color: #222; font-size: 14px; padding-left: 10px; gap: 11px; }
  .bike { margin-left: auto; }
  .app { width: 49px; display: grid; place-items: center; position: relative; }
  .app.view { width: 50px; padding-right: 2px; }
  .run::after, .now::after, .ext2::after { content: ''; position: absolute; bottom: 0; left: 4px; right: 5px; height: 2px; background: #f5a0c8; }
  .ext2::after { background: linear-gradient(90deg, #f5a0c8 0 31px, #a86889 31px); }
  .now { background: #a80f4e; }
  .now::after { left: 0; right: 0; }
  .tray { margin-left: auto; display: flex; align-items: center; gap: 8.800px; }
  .clock { width: 58px; margin: 0 17px 0 9px; display: flex; flex-direction: column; align-items: center; line-height: 17.500px; padding-top: 2px; }
  .note { margin-top: 12px; }
  .desk { width: 1px; background: #b47b91; margin: 0 4px 0 11px; }
</style>
